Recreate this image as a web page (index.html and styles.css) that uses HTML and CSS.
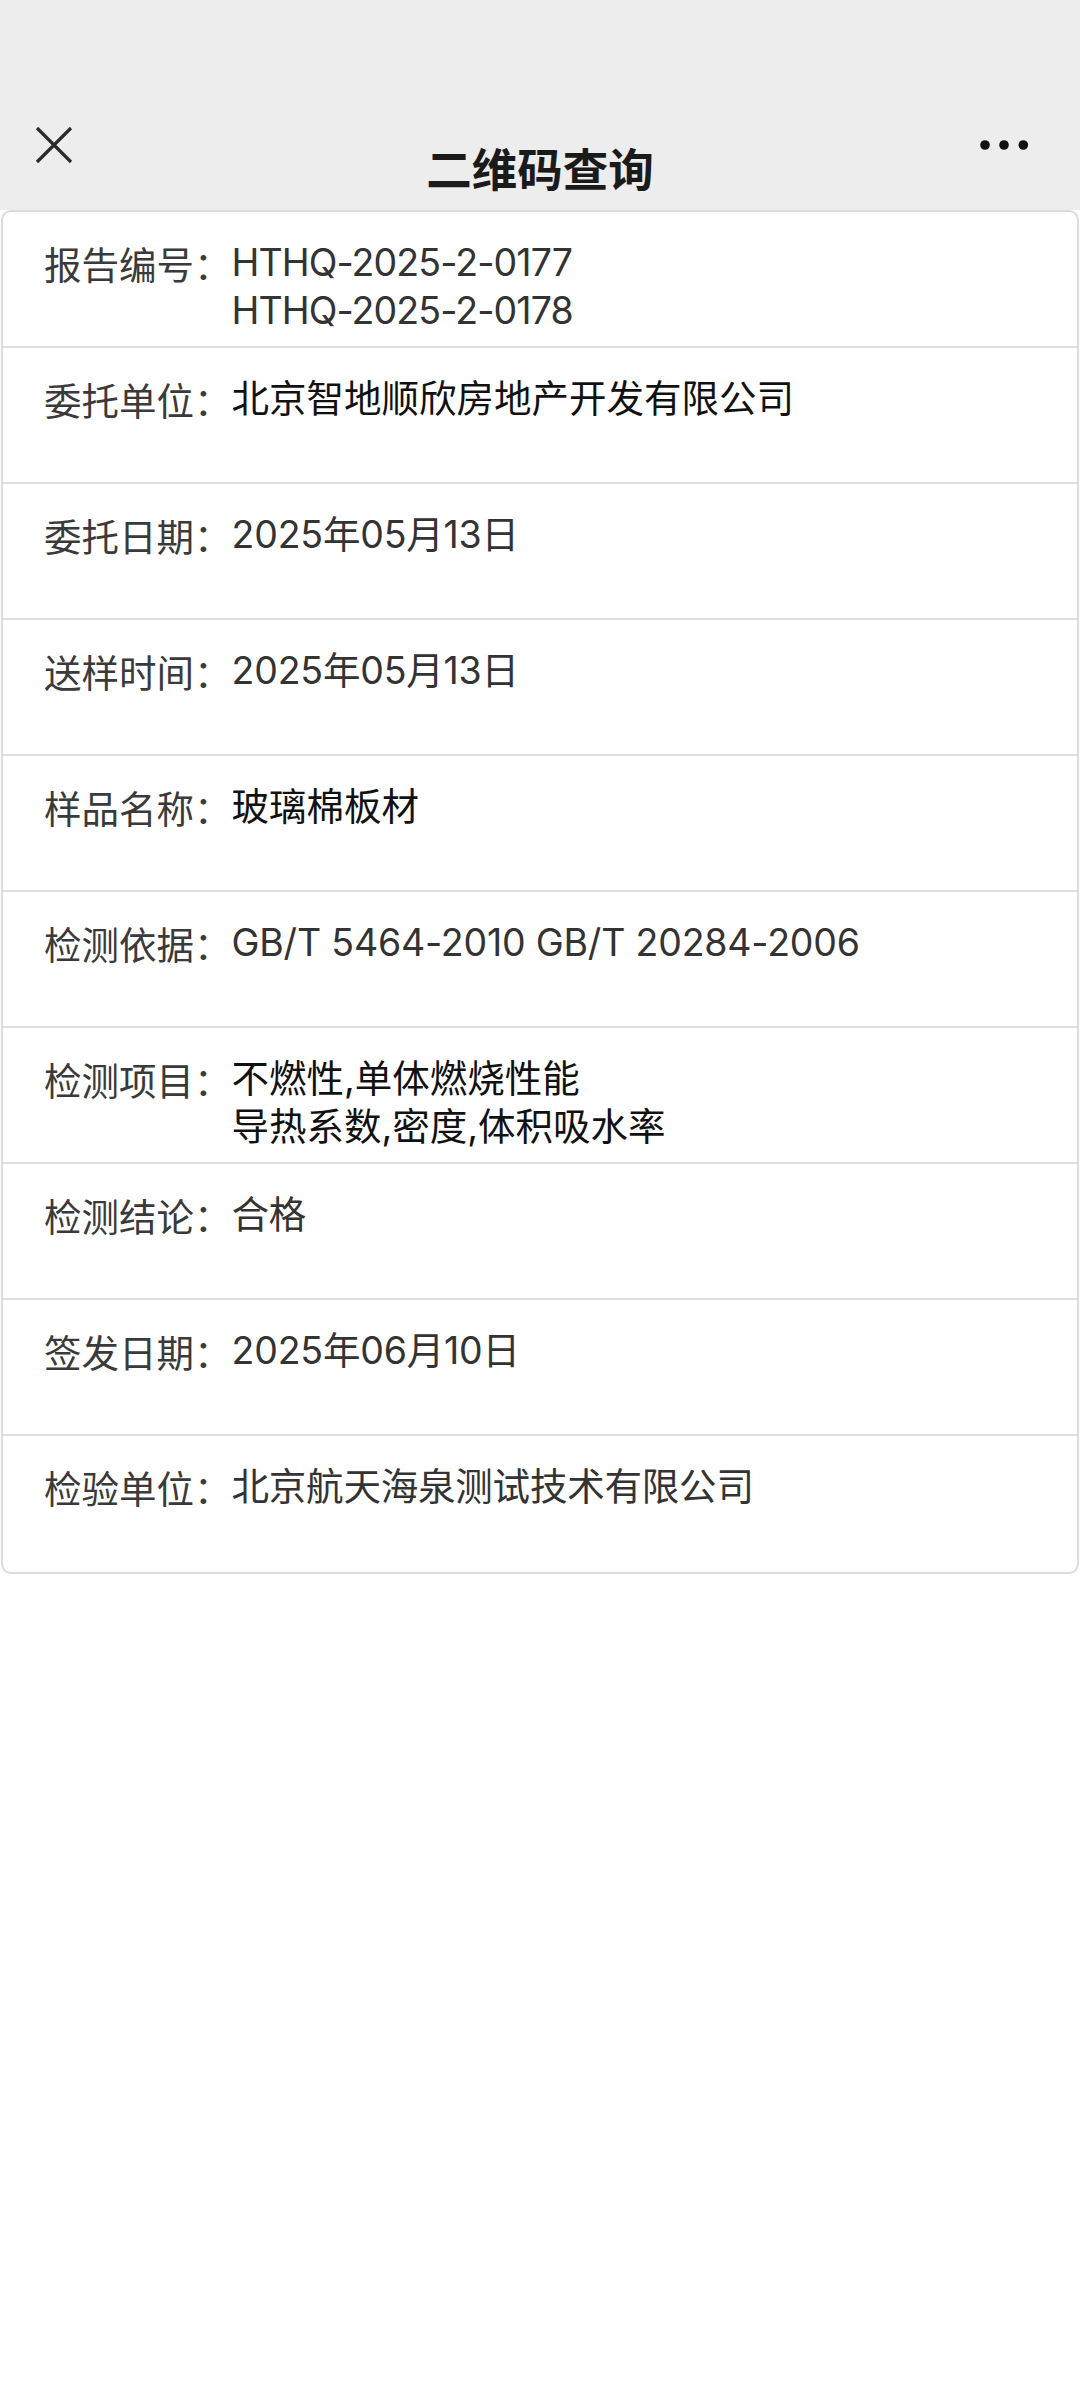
FILE: index.html
```html
<!DOCTYPE html>
<html lang="zh-CN">
<head>
<meta charset="utf-8">
<title>二维码查询</title>
<link rel="stylesheet" href="styles.css">
</head>
<body>
<header class="topbar">
  <div class="bar-left">
    <svg class="icon-close" width="38" height="38" viewBox="0 0 38 38"><path d="M2 2 L36 36 M36 2 L2 36" stroke="#2a2a2a" stroke-width="3.2" fill="none"/></svg>
  </div>
  <h1 class="title">二维码查询</h1>
  <div class="bar-right">
    <svg class="icon-more" width="50" height="12" viewBox="0 0 50 12"><circle cx="5" cy="6" r="4.8" fill="#111"/><circle cx="24" cy="6" r="4.8" fill="#111"/><circle cx="43.3" cy="6" r="4.8" fill="#111"/></svg>
  </div>
</header>
<main class="card">
  <div class="row"><span class="label">报告编号：</span><span class="value code">HTHQ-2025-2-0177<br>HTHQ-2025-2-0178</span></div>
  <div class="row"><span class="label">委托单位：</span><span class="value dark">北京智地顺欣房地产开发有限公司</span></div>
  <div class="row"><span class="label">委托日期：</span><span class="value">2025年05月13日</span></div>
  <div class="row"><span class="label">送样时间：</span><span class="value">2025年05月13日</span></div>
  <div class="row"><span class="label">样品名称：</span><span class="value dark">玻璃棉板材</span></div>
  <div class="row"><span class="label">检测依据：</span><span class="value">GB/T 5464-2010 GB/T 20284-2006</span></div>
  <div class="row"><span class="label">检测项目：</span><span class="value dark">不燃性,单体燃烧性能<br>导热系数,密度,体积吸水率</span></div>
  <div class="row"><span class="label">检测结论：</span><span class="value">合格</span></div>
  <div class="row"><span class="label">签发日期：</span><span class="value">2025年06月10日</span></div>
  <div class="row"><span class="label">检验单位：</span><span class="value">北京航天海泉测试技术有限公司</span></div>
</main>
</body>
</html>
```
FILE: styles.css
```css
* { box-sizing: border-box; }
html, body { margin: 0; padding: 0; background: #fff; }
body {
  width: 1080px;
  font-family: Inter, "Noto Sans CJK SC", sans-serif;
  color: #3a3a3a;
}
.topbar {
  height: 210px;
  background: #ededed;
  display: grid;
  grid-template-columns: 1fr auto 1fr;
  align-items: start;
  padding-top: 126px;
}
.bar-left { padding-left: 35px; }
.bar-right { display: flex; justify-content: flex-end; padding-right: 50px; padding-top: 13px; }
.icon-close, .icon-more { display: block; }
.title {
  margin: 11px 0 0 0;
  font-family: "Noto Sans CJK SC", sans-serif;
  font-size: 45.5px;
  line-height: 60px;
  font-weight: 600;
  color: #1a1a1a;
}
.card {
  margin: 0 1px;
  border: 2px solid #dcdcdc;
  border-radius: 10px;
  background: #fff;
}
.row {
  display: flex;
  height: 136px;
  padding: 27px 0 0 41px;
  border-bottom: 2px solid #dfdfdf;
  font-size: 37.5px;
  line-height: 48px;
}
.row:last-child { border-bottom: none; }
.label { flex: none; color: #3a3a3a; font-family: "Noto Sans CJK SC", sans-serif; }
.value { color: #333; letter-spacing: -0.2px; }
.value.code { letter-spacing: -0.9px; }
.value.dark { color: #111; letter-spacing: 0; }
```
